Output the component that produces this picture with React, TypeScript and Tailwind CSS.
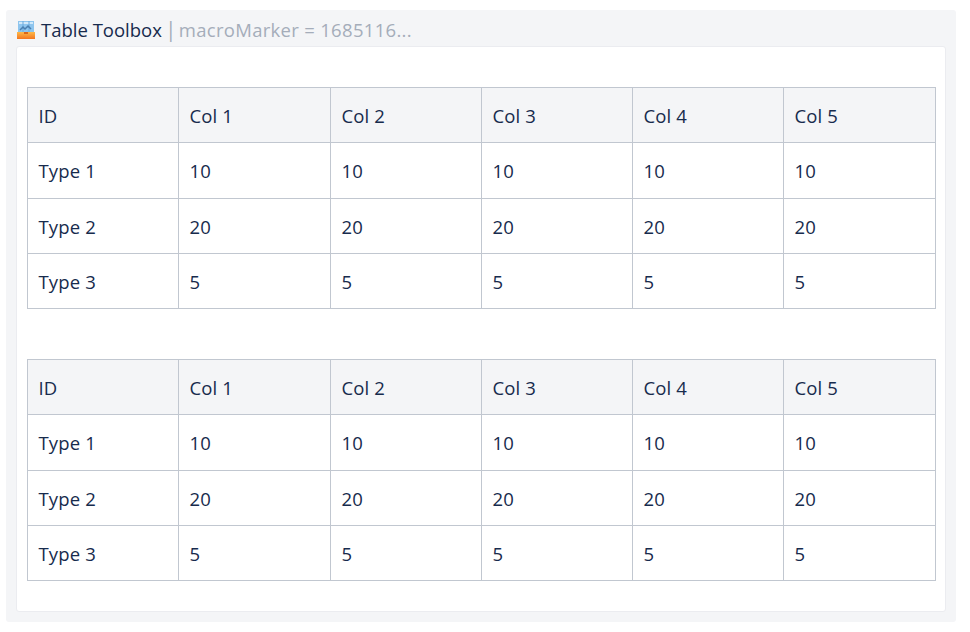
const rows = [
  { name: "Type 1", value: "10", height: "h-[56px]", pad: "pt-[1px]" },
  { name: "Type 2", value: "20", height: "h-[55px]", pad: "pt-[2px]" },
  { name: "Type 3", value: "5", height: "h-[55px]", pad: "pt-[2px]" },
];
const heads = ["Col 1", "Col 2", "Col 3", "Col 4", "Col 5"];
const widths = ["w-[151px]", "w-[152px]", "w-[151px]", "w-[151px]", "w-[151px]", "w-[152px]"];
const cell = "border border-[#c1c7d0] pl-[10.5px] pr-[10px] text-left font-normal align-middle tracking-[0.15px]";

function DataTable() {
  return (
    <table className="w-[908px] box-content table-fixed border-collapse text-[18.5px] text-[#172b4d]">
      <colgroup>
        {widths.map((w, i) => (
          <col key={i} className={w} />
        ))}
      </colgroup>
      <thead>
        <tr className="bg-[#f4f5f7] h-[55px]">
          <th className={`${cell} pt-[2px]`}>ID</th>
          {heads.map((h) => (
            <th key={h} className={`${cell} pt-[2px]`}>{h}</th>
          ))}
        </tr>
      </thead>
      <tbody>
        {rows.map(({ name, value, height, pad }) => (
          <tr key={name} className={height}>
            <td className={`${cell} ${pad}`}>{name}</td>
            {heads.map((h) => (
              <td key={h} className={`${cell} ${pad}`}>{value}</td>
            ))}
          </tr>
        ))}
      </tbody>
    </table>
  );
}

function ToolboxIcon() {
  return (
    <svg width="18" height="18" viewBox="0 0 18 18" className="shrink-0">
      <defs>
        <linearGradient id="tb" x1="0" y1="0" x2="0" y2="1">
          <stop offset="0" stopColor="#fdb94a" />
          <stop offset="1" stopColor="#f4761f" />
        </linearGradient>
      </defs>
      <rect x="1" y="0" width="16" height="11" fill="#8ec5ee" />
      <rect x="2" y="1" width="14" height="2" fill="#d2e9fa" />
      <path d="M6 0v11M12 0v11" stroke="#6aa9dc" strokeWidth="1" />
      <path d="M3 9l3-3 2 2 3-3 3 3" stroke="#4a7fb0" strokeWidth="1.5" fill="none" />
      <rect x="0" y="11" width="18" height="7" fill="url(#tb)" />
      <rect x="7" y="11" width="4" height="2" fill="#d9661a" />
    </svg>
  );
}

export default function App() {
  return (
    <div className="w-[970px] h-[632px] bg-white pt-[10px] pl-[6px] font-['Open_Sans','Noto_Sans',sans-serif]">
      <div className="w-[950px] h-[612px] bg-[#f4f5f7] rounded-[3px] px-[10px] flex flex-col">
        <div className="h-[36px] flex items-center pl-[1px] pt-[4px] text-[18.5px] whitespace-nowrap">
          <ToolboxIcon />
          <span className="text-[#172b4d] ml-[6px]">Table Toolbox</span>
          <span className="text-[#a5adba] tracking-[0.3px] ml-[3px]">
            <span className="text-[21px] leading-none">|</span>
            <span className="ml-[2px]">macroMarker = 1685116...</span>
          </span>
        </div>
        <div className="w-[930px] h-[566px] bg-white rounded-[3px] border border-[#ebecf0] pt-[40px] pl-[10px] flex flex-col gap-[50px]">
          <DataTable />
          <DataTable />
        </div>
      </div>
    </div>
  );
}
